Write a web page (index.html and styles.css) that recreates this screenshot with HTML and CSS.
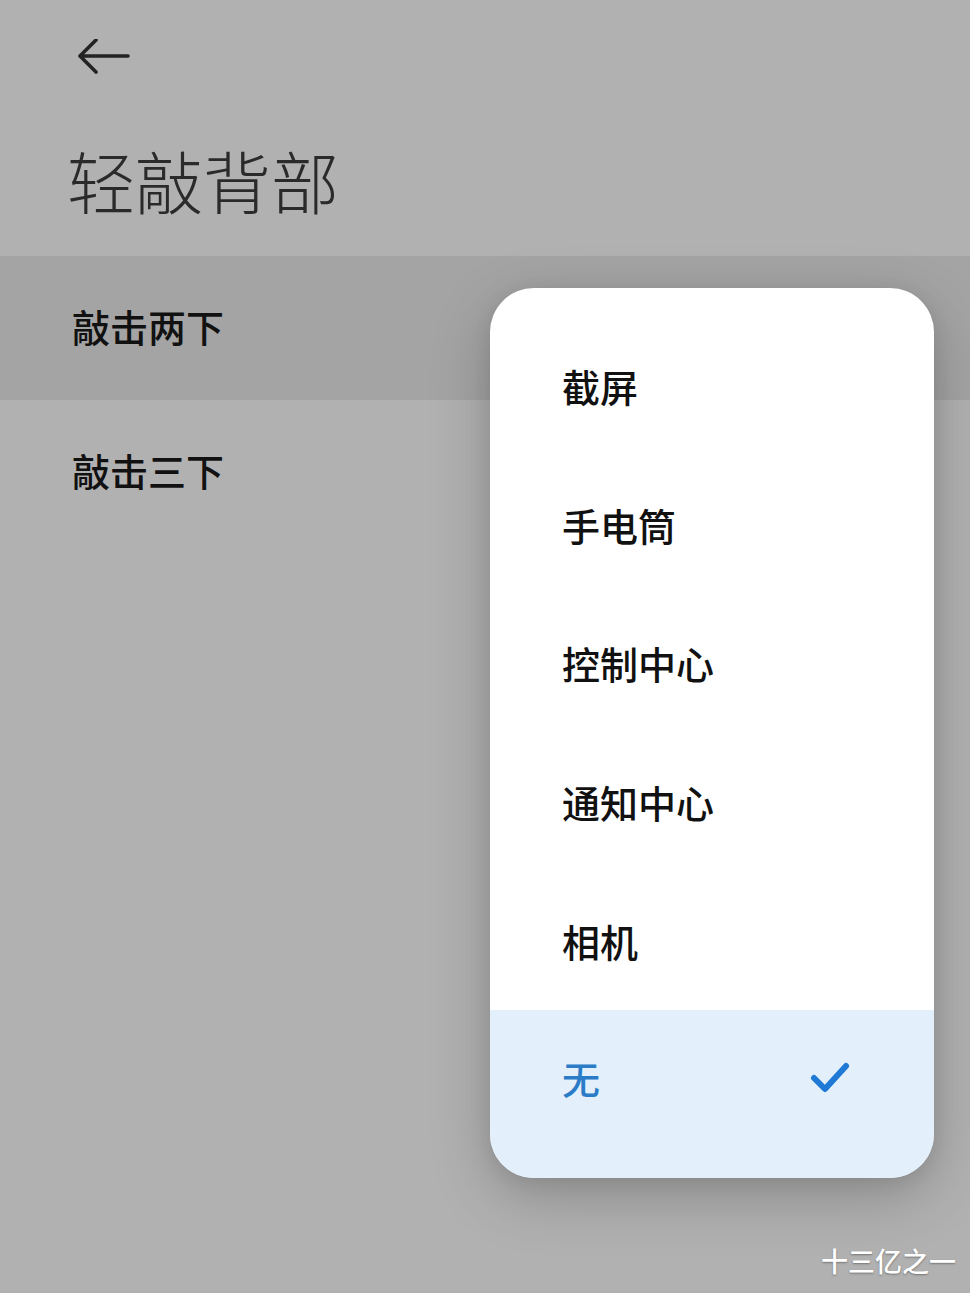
FILE: index.html
```html
<!DOCTYPE html>
<html lang="zh-CN">
<head>
<meta charset="utf-8">
<title>轻敲背部</title>
<link rel="stylesheet" href="styles.css">
</head>
<body>
<div class="screen">
  <header class="header">
    <div class="back">
      <svg width="56" height="40" viewBox="0 0 56 40">
        <path d="M3 17 H51 M19 1 L3 17 L19 33" fill="none" stroke="#232323" stroke-width="3.6" stroke-linecap="round" stroke-linejoin="round"/>
      </svg>
    </div>
    <h1 class="title">轻敲背部</h1>
  </header>
  <div class="row row-active">敲击两下</div>
  <div class="row">敲击三下</div>

  <div class="menu">
    <div class="item">截屏</div>
    <div class="item">手电筒</div>
    <div class="item">控制中心</div>
    <div class="item">通知中心</div>
    <div class="item">相机</div>
    <div class="item item-selected">
      <span>无</span>
      <svg class="check" width="40" height="34" viewBox="0 0 40 34">
        <path d="M4 17 L15 28 L36 5" fill="none" stroke="#1f7ad6" stroke-width="6" stroke-linecap="round" stroke-linejoin="round"/>
      </svg>
    </div>
  </div>

  <div class="watermark">十三亿之一</div>
</div>
</body>
</html>
```

FILE: styles.css
```css
html, body {
  margin: 0;
  padding: 0;
}
body {
  font-family: "Noto Sans CJK SC", "Noto Sans", sans-serif;
  background: #b1b1b1;
}
.screen {
  position: relative;
  width: 970px;
  height: 1293px;
  overflow: hidden;
  background: #b1b1b1;
}
.header {
  height: 256px;
  box-sizing: border-box;
  padding: 39px 0 0 77px;
}
.back {
  height: 40px;
}
.back svg {
  display: block;
}
.title {
  margin: 55px 0 0 -10px;
  font-size: 68px;
  font-weight: 300;
  line-height: 92px;
  color: #2a2a2a;
  letter-spacing: 0;
}
.row {
  height: 144px;
  box-sizing: border-box;
  padding-bottom: 6px;
  display: flex;
  align-items: center;
  padding-left: 72px;
  font-size: 38px;
  font-weight: 500;
  color: #111;
}
.row-active {
  background: #a4a4a4;
}
.menu {
  position: absolute;
  left: 490px;
  top: 288px;
  width: 444px;
  box-sizing: border-box;
  padding-top: 28px;
  background: #fff;
  border-radius: 44px;
  overflow: hidden;
  box-shadow: 0 18px 60px rgba(0, 0, 0, 0.22), 0 4px 18px rgba(0, 0, 0, 0.08);
}
.item {
  height: 138.8px;
  display: flex;
  align-items: center;
  justify-content: space-between;
  padding: 0 84px 0 72px;
  font-size: 38px;
  font-weight: 500;
  color: #111;
}
.item-selected {
  height: 168px;
  box-sizing: border-box;
  padding-bottom: 32px;
  background: #e3f0fc;
  color: #2a7cc7;
}
.check {
  display: block;
}
.watermark {
  position: absolute;
  right: 14px;
  bottom: 13px;
  font-size: 27px;
  font-weight: 500;
  color: #fff;
  letter-spacing: 0;
  text-shadow: 0 1px 2px rgba(0, 0, 0, 0.35);
}
```
